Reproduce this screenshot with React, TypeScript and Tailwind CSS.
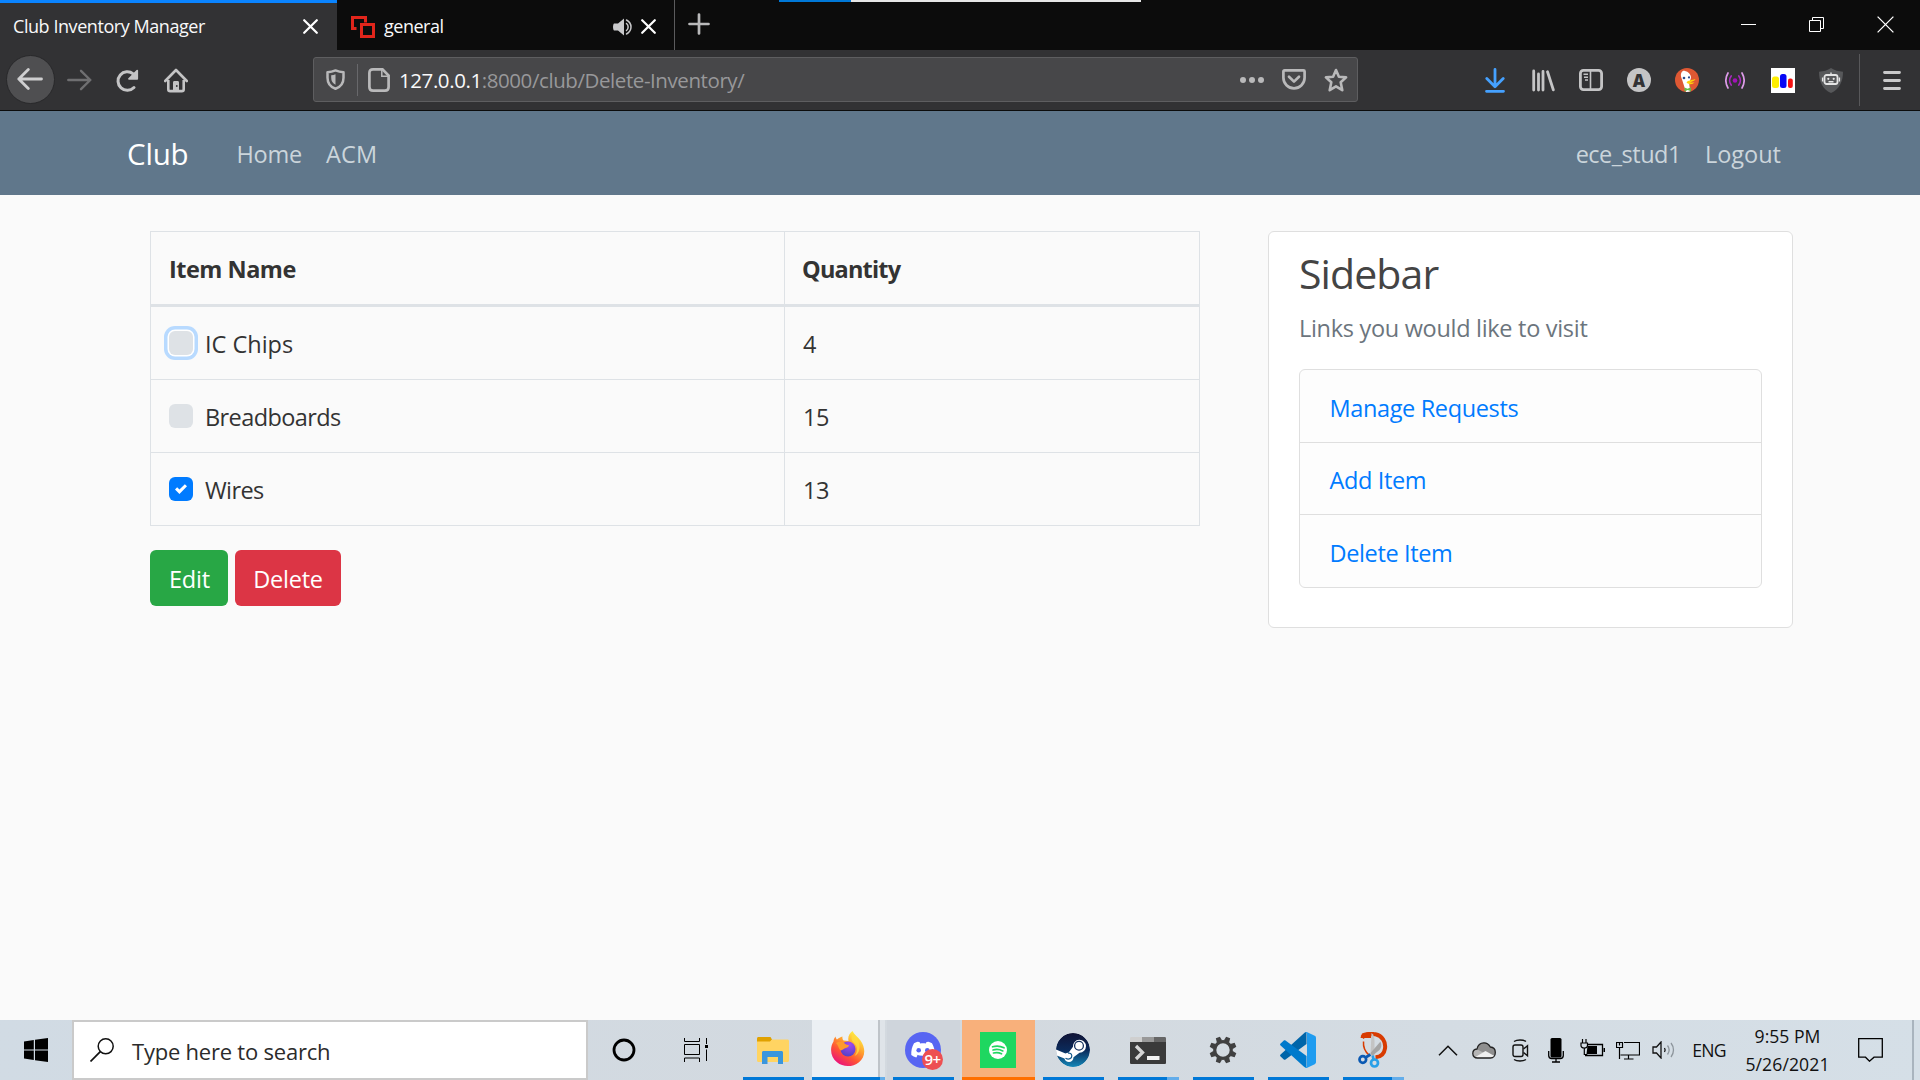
import type { ReactNode } from "react";

type IconProps = { className?: string };

function Svg({ w, h, box, className = "", children }: { w: number; h: number; box?: string; className?: string; children: ReactNode }) {
  return (
    <svg width={w} height={h} viewBox={box ?? `0 0 ${w} ${h}`} fill="none" className={`block shrink-0 ${className}`}>
      {children}
    </svg>
  );
}

/* ---------- Browser icons ---------- */

const CloseTab = ({ className }: IconProps) => (
  <Svg w={15} h={15} className={className}>
    <path d="M1.2 1.2l12.6 12.6M13.8 1.2L1.2 13.8" stroke="#fff" strokeWidth="2.2" strokeLinecap="round" />
  </Svg>
);

const SpeakerTab = () => (
  <Svg w={20} h={18}>
    <path d="M1 5.5h4L11 .5v17l-6-5H1c-.6 0-1-3-1-3.500s.4-3.500 1-3.500z" fill="#c9c9cb" />
    <path d="M13.500 5.500c2.200 1.800 2.200 5.200 0 7M13.500 2c6 3.300 6 10.700 0 14" stroke="#c9c9cb" strokeWidth="1.500" strokeLinecap="round" />
  </Svg>
);

const Favicon = () => (
  <Svg w={24} h={22}>
    <path d="M5.500 12.500H1.500v-11h13v5" stroke="#e1251b" strokeWidth="3" />
    <rect x="10.500" y="8.500" width="12" height="12" stroke="#e1251b" strokeWidth="3" />
  </Svg>
);

const Back = () => (
  <Svg w={26} h={22}>
    <path d="M24.500 11H1.800M11.300 1.500L1.800 11l9.500 9.500" stroke="#cfcfd0" strokeWidth="2.800" strokeLinecap="round" strokeLinejoin="round" />
  </Svg>
);

const Forward = () => (
  <Svg w={25} h={22}>
    <path d="M1.300 11h22M14 1.800l9.300 9.200-9.300 9.200" stroke="#6f6f71" strokeWidth="2.400" strokeLinecap="round" strokeLinejoin="round" />
  </Svg>
);

const Reload = () => (
  <Svg w={24} h={23}>
    <path d="M18 18.500A9.300 9.300 0 1 1 17.200 4.800l2.500 2.700" stroke="#c4c4c5" strokeWidth="3" strokeLinecap="round" />
    <path d="M21.200 1.600v8.200h-8.200z" fill="#c4c4c5" stroke="#c4c4c5" strokeWidth="1.800" strokeLinejoin="round" />
  </Svg>
);

const Home = () => (
  <Svg w={24} h={25}>
    <path d="M1.200 13L12 2l10.800 11" stroke="#c4c4c5" strokeWidth="2.600" strokeLinecap="round" strokeLinejoin="round" />
    <path d="M4.300 12v9.200c0 1.200.7 1.900 1.900 1.900h11.600c1.200 0 1.900-.7 1.900-1.900V12" stroke="#c4c4c5" strokeWidth="2.600" />
    <path d="M9 23v-8.500c0-1 .6-1.500 1.500-1.500h3c.9 0 1.500.5 1.500 1.500V23z" fill="#c4c4c5" />
    <circle cx="12.800" cy="18" r=".9" fill="#323234" />
  </Svg>
);

const ShieldUrl = () => (
  <Svg w={19} h={21}>
    <path d="M1.500 3.300C4.500 3 7.200 2.300 9.500 1.400c2.300.9 5 1.600 8 1.900v5.400c0 5.500-3 9.300-8 11-5-1.700-8-5.500-8-11z" stroke="#b9b9ba" strokeWidth="2.500" strokeLinejoin="round" />
    <path d="M9.500 5.200v10.600c-2.700-1.300-4.300-3.500-4.300-7V6.300c1.700-.2 3-.6 4.300-1.100z" fill="#b9b9ba" />
  </Svg>
);

const PageIcon = () => (
  <Svg w={22} h={24}>
    <path d="M5 1.400h9.500l6.100 6.100V19c0 2.400-1.300 3.600-3.600 3.600H5c-2.400 0-3.600-1.200-3.600-3.600V5C1.400 2.600 2.600 1.400 5 1.400z" stroke="#b9b9ba" strokeWidth="2.700" />
    <path d="M13.800 1.500v6.800h6.800" stroke="#b9b9ba" strokeWidth="1.500" />
  </Svg>
);

const Dots = () => (
  <Svg w={24} h={6}>
    <circle cx="3" cy="3" r="3" fill="#b9b9ba" />
    <circle cx="12" cy="3" r="3" fill="#b9b9ba" />
    <circle cx="21" cy="3" r="3" fill="#b9b9ba" />
  </Svg>
);

const Pocket = () => (
  <Svg w={24} h={21}>
    <path d="M2.500 1.400h19c.7 0 1.100.4 1.100 1.100v6.300a10.600 10.600 0 0 1-21.200 0V2.500c0-.7.400-1.100 1.100-1.100z" stroke="#b9b9ba" strokeWidth="2.700" />
    <path d="M7 7.700l5 4.900 5-4.900" stroke="#b9b9ba" strokeWidth="2.700" strokeLinecap="round" strokeLinejoin="round" />
  </Svg>
);

const Star = () => (
  <Svg w={24} h={24}>
    <path d="M12 2l2.900 6.700 7.200.7-5.400 4.900 1.600 7.900L12 18.300l-6.300 3.900 1.600-7.900-5.400-4.900 7.200-.7z" stroke="#b9b9ba" strokeWidth="2.600" strokeLinejoin="round" />
  </Svg>
);

const Download = () => (
  <Svg w={20} h={25}>
    <path d="M10 1.500v16M1.800 10.500l8.200 8.200 8.200-8.200M1.500 23.300h17" stroke="#45a1ff" strokeWidth="2.800" strokeLinecap="round" strokeLinejoin="round" />
  </Svg>
);

const Library = () => (
  <Svg w={24} h={23}>
    <path d="M2.700 2v19M7.500 5v16M12 2.500V21M16.500 2.800l5.800 18" stroke="#c4c4c5" strokeWidth="2.800" strokeLinecap="round" />
  </Svg>
);

const SidebarIcon = () => (
  <Svg w={24} h={22}>
    <rect x="1.400" y="1.400" width="21.200" height="19.200" rx="3" stroke="#c4c4c5" strokeWidth="2.800" />
    <path d="M11.500 2v18" stroke="#c4c4c5" strokeWidth="1.600" />
    <path d="M4.500 5.300h4.500M5 8.200h4M6 11h3" stroke="#c4c4c5" strokeWidth="1.500" />
  </Svg>
);

const Duck = () => (
  <Svg w={24} h={24}>
    <circle cx="12" cy="12" r="12" fill="#de5833" />
    <path d="M6.500 4.500C7.300 3 8.500 2.600 10 3c3.300.7 5.700 3 6 6 .1 2-1.300 3.500-1.700 5.500-.3 2 .5 5.500 1.200 8.800A12 12 0 0 1 11 24L7.500 13C6.500 10 5 7.500 6.500 4.500z" fill="#fff" />
    <circle cx="9" cy="10" r="1.300" fill="#2d4f8e" />
    <circle cx="14" cy="9.400" r="1.100" fill="#2d4f8e" />
    <path d="M11.500 14.500c1.500-2.500 5-2 9-3.500-.5 2-3.500 2.600-5.500 3.200 1.500.5 3 .4 4.500 0-1.500 2.300-5.500 2.800-8 .3z" fill="#fdd20a" />
    <path d="M9.500 19.500l3 1.200 3.500-1.500v4l-3.300-1.200-3.200 1.500z" fill="#65bc46" />
  </Svg>
);

const Podcast = () => (
  <Svg w={20} h={17}>
    <circle cx="10" cy="8.500" r="2.300" fill="#a312b8" />
    <path d="M6.200 4c-2 2.600-2 6.400 0 9M13.800 4c2 2.600 2 6.400 0 9" stroke="#a92abf" strokeWidth="1.700" strokeLinecap="round" />
    <path d="M3 1c-2.600 4.500-2.600 10.500 0 15M17 1c2.600 4.500 2.600 10.500 0 15" stroke="#dd9be8" strokeWidth="1.700" strokeLinecap="round" />
  </Svg>
);

const Bars = () => (
  <Svg w={24} h={25}>
    <path d="M0 0h24v25H0z" fill="#fff" />
    <rect x="1" y="8.500" width="7" height="11.500" rx="2.500" fill="#ffee00" />
    <rect x="9" y="6" width="6.500" height="14" rx="2.500" fill="#0707f5" />
    <rect x="17" y="10.500" width="4.800" height="9.500" rx="2" fill="#f51212" />
  </Svg>
);

const BotShield = () => (
  <Svg w={24} h={25}>
    <path d="M12 0c3.500 2.300 7.500 3.500 12 3.700C24 13.500 20.500 21 12 25 3.500 21 0 13.500 0 3.700 4.500 3.500 8.500 2.300 12 0z" fill="#57585a" />
    <rect x="5.500" y="7" width="13" height="9" rx="2" stroke="#e4e4e4" strokeWidth="1.800" />
    <path d="M12 4.500V7M3.600 9.500v4M20.400 9.500v4M9.500 13.700h5" stroke="#e4e4e4" strokeWidth="1.400" />
    <circle cx="9.300" cy="10.800" r="1.100" fill="#e4e4e4" />
    <circle cx="14.700" cy="10.800" r="1.100" fill="#e4e4e4" />
  </Svg>
);

const Menu = () => (
  <Svg w={18} h={19}>
    <path d="M1.500 1.500h15M1.500 9.500h15M1.500 17.500h15" stroke="#c9c9ca" strokeWidth="2.800" strokeLinecap="round" />
  </Svg>
);

/* ---------- Taskbar icons ---------- */

const Windows = () => (
  <Svg w={24} h={24}>
    <path d="M0 3.500L9.800 2v9.500H0zM11 1.800L24 0v11.500H11zM0 12.500h9.800V22L0 20.500zM11 12.500h13V24l-13-1.800z" fill="#000" />
  </Svg>
);

const Search = () => (
  <Svg w={24} h={24}>
    <circle cx="15.700" cy="8.300" r="7.500" stroke="#111" strokeWidth="1.500" />
    <path d="M10.300 13.700L.5 23.500" stroke="#111" strokeWidth="1.700" />
  </Svg>
);

const Cortana = () => (
  <Svg w={24} h={24}>
    <circle cx="12" cy="12" r="10" stroke="#000" strokeWidth="2.800" />
  </Svg>
);

const TaskView = () => (
  <Svg w={24} h={24}>
    <path d="M.5 0v3.500h15V0M.5 24v-4h15v4M.5 6.500h15v10H.5zM22.500 0v6M22.500 11.500V23" stroke="#000" />
    <path d="M21 7h3v3h-3z" fill="#000" />
  </Svg>
);

const Folder = () => (
  <Svg w={32} h={27}>
    <path d="M0 1.500C0 .6.600 0 1.500 0h12L15 2.500 13.500 5H0z" fill="#e0a100" />
    <path d="M0 4.500h13l2-2h15.500c.9 0 1.500.6 1.500 1.500v19.500c0 .9-.6 1.500-1.500 1.500h-29C.6 25 0 24.400 0 23.500z" fill="#ffd462" />
    <path d="M5 27V15.500c0-.9.600-1.500 1.500-1.500h18c.9 0 1.500.6 1.500 1.500V27h-5v-7H10.500v7z" fill="#3a96dd" />
  </Svg>
);

const Firefox = () => (
  <Svg w={34} h={36}>
    <defs>
      <linearGradient id="ffBody" x1="28" y1="4" x2="8" y2="34" gradientUnits="userSpaceOnUse">
        <stop offset="0" stopColor="#fff044" />
        <stop offset=".35" stopColor="#ffa22e" />
        <stop offset=".65" stopColor="#ff5434" />
        <stop offset="1" stopColor="#e9107e" />
      </linearGradient>
      <radialGradient id="ffGlobe" cx=".6" cy=".2" r=".9">
        <stop offset="0" stopColor="#a34bf0" />
        <stop offset="1" stopColor="#4a40c0" />
      </radialGradient>
    </defs>
    <path d="M21.500 0c1.500 3.500 5.500 6 8 9.500 6 8.500 4.300 17-1.500 21.700-6.500 5.300-16 5.100-22 .1C-.5 26-1.600 17 2.500 10.500c.2-2 .8-3.500 2-5 .3 1.500.8 2.300 1.500 3C7.500 7 9.500 6 11.500 5.500c-.3 1.800 0 3 1 4l5 .5c-.8-4 .5-7.500 4-10z" fill="url(#ffBody)" />
    <circle cx="17" cy="18" r="7.500" fill="url(#ffGlobe)" />
    <path d="M5 12c4-2.500 7.500-1 10 1.500l3 .7c-.5 2.500-3 2.300-4.500 3.300-2 1.300-3.500 2.500-4.500 1.500-1.500-2.500-2-5-4-7z" fill="#ff9a2c" />
    <path d="M22 2c3 4 6 7 6.500 12.500.5 5-1.500 9-5 10.500 3.500-4.500 3.500-9.500-1-13.500-2.500-2.500-2.500-6-.5-9.500z" fill="#ffdc3e" opacity=".8" />
  </Svg>
);

const Discord = () => (
  <Svg w={36} h={36}>
    <circle cx="18" cy="18" r="18" fill="#5865f2" />
    <path d="M12.500 9.800l2 .2.700 1.500c1.900-.3 3.700-.3 5.600 0l.7-1.500 2-.2c1.200.3 2.600.9 3.500 1.500 2 3.500 3 7.500 2.700 11.800a13 13 0 0 1-5 2.500l-1.200-2 .9-.9c-4 1.500-8.800 1.500-12.800 0l.9.900-1.200 2a13 13 0 0 1-5-2.500c-.3-4.300.7-8.300 2.700-11.800.9-.6 2.300-1.200 3.500-1.500z" fill="#fff" />
    <circle cx="13.700" cy="18.300" r="2.300" fill="#5865f2" />
    <circle cx="22.300" cy="18.300" r="2.300" fill="#5865f2" />
  </Svg>
);

const Spotify = () => (
  <Svg w={36} h={36}>
    <path d="M0 0h36v36H0z" fill="#1ed760" />
    <circle cx="18" cy="18" r="9" fill="#fff" />
    <path d="M12.500 14.800c4-1.200 8-.8 11.500 1M13 18c3.500-1 6.800-.6 9.800.9M13.500 21c3-.8 5.600-.5 8 .8" stroke="#1ed760" strokeWidth="1.700" strokeLinecap="round" />
  </Svg>
);

const Steam = () => (
  <Svg w={34} h={34}>
    <defs>
      <linearGradient id="steamBg" x1="17" y1="0" x2="17" y2="34" gradientUnits="userSpaceOnUse">
        <stop offset="0" stopColor="#111335" />
        <stop offset=".5" stopColor="#0b2a5a" />
        <stop offset="1" stopColor="#1387b8" />
      </linearGradient>
      <clipPath id="steamClip">
        <circle cx="17" cy="17" r="17" />
      </clipPath>
    </defs>
    <g clipPath="url(#steamClip)">
      <circle cx="17" cy="17" r="17" fill="url(#steamBg)" />
      <path d="M0 16.500l9.500 4c1-.6 2-.8 3-.7l4.500-6a6.500 6.500 0 1 1 6.500 6l-6 4.500c0 3-2 4.700-4.500 4.700s-4-1.500-4.500-3.500L-1 22z" fill="#fff" />
      <circle cx="23" cy="12.700" r="4.400" stroke="#14305e" strokeWidth="1.300" />
      <path d="M9.500 25.200c3.500 2 6.500 0 6.300-2.500-.2-2.200-2-3-3.800-2.500" stroke="#155a8c" strokeWidth="1.200" />
    </g>
  </Svg>
);

const Terminal = () => (
  <Svg w={36} h={27}>
    <path d="M0 5h36v20.500c0 1-.5 1.500-1.500 1.500h-33C.5 27 0 26.500 0 25.500z" fill="#3a3a3a" />
    <path d="M0 5V1.500C0 .5.500 0 1.500 0H12v5z" fill="#cfcfcf" />
    <path d="M12 0h12v5H12z" fill="#999" />
    <path d="M24 0h10.500c1 0 1.500.5 1.500 1.500V5H24z" fill="#666" />
    <path d="M6 9l6.500 6.500L6 22" stroke="#d6d6d6" strokeWidth="3.300" />
    <path d="M17 19h12.500v4H17z" fill="#f2f2f2" />
  </Svg>
);

const gearTeeth = [22.5, 67.5, 112.5, 157.5, 202.5, 247.5, 292.5, 337.5];

const Gear = () => (
  <Svg w={28} h={28}>
    <circle cx="14" cy="14" r="8.300" stroke="#404040" strokeWidth="3.200" />
    {gearTeeth.map((angle) => (
      <path key={angle} d="M11.800.5h4.400l.6 4.500h-5.600z" fill="#404040" transform={`rotate(${angle} 14 14)`} />
    ))}
  </Svg>
);

const VsCode = () => (
  <Svg w={36} h={36}>
    <path d="M26.500 0v12L5.500 27.500c-.6.4-1.200.4-1.700-.1L.6 24.600c-.7-.6-.7-1.500 0-2.100L24 1.200C24.800.5 25.600.1 26.500 0z" fill="#0065a9" />
    <path d="M26.500 36V24L5.500 8.500c-.6-.4-1.200-.4-1.700.1L.6 11.400c-.7.6-.7 1.500 0 2.100L24 34.800c.8.7 1.600 1.100 2.500 1.200z" fill="#007acc" />
    <path d="M25.500.3c.5-.3 1.200-.3 1.800 0l7.400 3.500c.8.400 1.300 1.200 1.300 2.100v24.200c0 .9-.5 1.700-1.300 2.100l-7.400 3.500c-1.200.5-2.300.1-3.200-.8 1.300 1.200 2.900.4 2.900-1.100V2.200c0-1.500-1.600-2.300-2.900-1.100z" fill="#1f9cf0" />
  </Svg>
);

const Snip = () => (
  <Svg w={30} h={36}>
    <path d="M4 5.500C7 2.500 12 1.300 17.500 2.300 24 3.600 28 9.500 27 16.500c-.8 5.500-4.500 8.500-9.500 8.800" stroke="#d83b01" strokeWidth="4" />
    <path d="M2.500 6L4 1.500C7 .3 10 0 14 0l-1 6z" fill="#d83b01" />
    <path d="M5.500 9.500c-.5 6 1.500 10 5.500 13.500" stroke="#d83b01" strokeWidth="1.500" />
    <path d="M13.500 1c2 1.500 3 4 3 8v15l-4-2z" fill="#c4c4c4" />
    <path d="M22.500 9.500c1.500 3.500 1 6-1 8.500l-7.500 6-1.500-3z" fill="#a5a5a5" />
    <circle cx="4.800" cy="27.500" r="3.300" stroke="#0a59b3" strokeWidth="2.700" />
    <path d="M7.500 25.500l5-3" stroke="#0a59b3" strokeWidth="2.700" />
    <circle cx="16.500" cy="31" r="3.500" stroke="#28a0e8" strokeWidth="2.700" />
    <path d="M15.500 27.500l-.8-4" stroke="#28a0e8" strokeWidth="2.700" />
  </Svg>
);

const Chevron = () => (
  <Svg w={20} h={11}>
    <path d="M1 10.200L10 1.200l9 9" stroke="#111" strokeWidth="1.500" />
  </Svg>
);

const Cloud = () => (
  <Svg w={24} h={17}>
    <path d="M5.500 16C2.500 16 .8 14 .8 11.500S2.500 7.200 5 7c.7-3.700 3.500-6.200 7-6.200 3 0 5 1.500 6.300 4.200 3 .2 5 2.500 5 5.500S21.500 16 18.500 16z" fill="#8f8f8f" />
    <path d="M5.500 16C2.500 16 .8 14 .8 11.500S3 7 5.500 7.500L12 11l10.500 3c-1 1.400-2.300 2-4 2z" fill="#b5b5b5" />
    <path d="M3 15.200L13.500 9l9 5c-1 1.400-2.300 2-4 2h-13c-1 0-1.800-.3-2.500-.8z" fill="#efefef" />
    <path d="M5.500 16C2.500 16 .8 14 .8 11.500S2.500 7.200 5 7c.7-3.700 3.500-6.200 7-6.200 3 0 5 1.500 6.300 4.200 3 .2 5 2.500 5 5.500S21.500 16 18.500 16z" stroke="#222" strokeWidth="1.300" />
  </Svg>
);

const Meet = () => (
  <Svg w={17} h={23}>
    <path d="M2 2.500C5 .5 11 .5 14 2.500M2 20.500c3 2 9 2 12 0" stroke="#111" strokeWidth="1.300" />
    <rect x="1" y="6" width="10" height="11.500" rx="2" stroke="#111" strokeWidth="1.400" />
    <path d="M11.500 10l4-3.300v10L11.500 13.500" stroke="#111" strokeWidth="1.400" />
  </Svg>
);

const Mic = () => (
  <Svg w={16} h={25}>
    <rect x="2.500" y="0" width="11" height="19.500" rx="1.500" fill="#000" />
    <path d="M.7 13v4.500c0 2 1 3 3 3h8.600c2 0 3-1 3-3V13M8 20.500V24M4 24h8" stroke="#000" strokeWidth="1.300" />
  </Svg>
);

const Battery = () => (
  <Svg w={25} h={18} className="-mt-1">
    <path d="M7 5.500h15.500v11H5" stroke="#000" strokeWidth="1.300" />
    <path d="M7.500 7h9.500v8H6.500zM23.500 9H25v4h-1.500z" fill="#000" />
    <path d="M2.500 0v4M6 0v4M1 4h6.500v2.500c0 1.500-1 2.500-3.200 2.500S1 8 1 6.500zM4.300 9v6.500h3" stroke="#000" strokeWidth="1.200" />
  </Svg>
);

const Network = () => (
  <Svg w={24} h={19}>
    <path d="M8 1.500h15.500V14H4.500M12.500 14v4M8 18h9.500M.5 1.500h6v5h-6zM3.500 6.500V18M3.500 1.500v3" stroke="#000" strokeWidth="1.200" />
  </Svg>
);

const Volume = () => (
  <Svg w={24} h={18}>
    <path d="M1 6h3.500L9 1v16L4.500 12H1z" stroke="#111" strokeWidth="1.300" />
    <path d="M12.500 7c.8 1.200.8 2.800 0 4" stroke="#111" strokeWidth="1.300" />
    <path d="M15.500 4.500c2 2.700 2 6.300 0 9M19 2c3.300 4.200 3.300 9.800 0 14" stroke="#8d959c" strokeWidth="1.300" />
  </Svg>
);

const Notification = () => (
  <Svg w={25} h={24}>
    <path d="M.7.700h23.600v18.500H16l-4.500 4-4-4H.7z" stroke="#000" strokeWidth="1.300" />
  </Svg>
);

/* ---------- Browser chrome ---------- */

function TabStrip() {
  return (
    <div className="relative flex h-[50px] bg-[#0c0c0c] text-[18px] text-[#f9f9fa]">
      <div className="flex w-[337px] items-center border-t-[3px] border-[#0a84ff] bg-[#323234] pl-[13px] pr-[19px]">
        <span className="grow pb-0.5 leading-6 tracking-[-0.44px]">Club Inventory Manager</span>
        <CloseTab className="-mt-px" />
      </div>
      <div className="flex w-[338px] items-center border-r border-[#5b5b5d] pl-[14px] pr-[18px] pt-[3px]">
        <Favicon />
        <span className="ml-[9px] grow pb-0.5 leading-6 tracking-[-0.5px]">general</span>
        <SpeakerTab />
        <CloseTab className="ml-[8px] -mt-px" />
      </div>
      <div className="flex w-12 items-center justify-center pb-0.5">
        <Svg w={22} h={22}>
          <path d="M11 1.500v19M1.500 11h19" stroke="#b9b9ba" strokeWidth="2.700" strokeLinecap="round" />
        </Svg>
      </div>
      <div className="ml-auto flex items-center pb-0.5">
        <div className="flex w-[69px] justify-center">
          <div className="ml-px h-px w-[15px] bg-white" />
        </div>
        <div className="flex w-[69px] justify-center">
          <Svg w={15} h={15}>
            <path d="M3.500 3.500v-3h11v11h-3M.5 3.500h11v11H.5z" stroke="#fff" />
          </Svg>
        </div>
        <div className="flex w-[69px] justify-center">
          <Svg w={17} h={17}>
            <path d="M.6.600l15.800 15.800M16.400.6L.6 16.400" stroke="#fff" strokeWidth="1.300" />
          </Svg>
        </div>
      </div>
      <div className="absolute left-[779px] top-0 flex h-[2px] w-[362px]">
        <div className="w-[72px] bg-[#0078d7]" />
        <div className="grow bg-[#e6e6e6]" />
      </div>
    </div>
  );
}

const extensions = [
  Download,
  Library,
  SidebarIcon,
  () => (
    <div className="flex size-6 items-center justify-center rounded-full bg-[#c4c4c5] text-[17px] font-extrabold leading-none text-[#323234]">A</div>
  ),
  Duck,
  Podcast,
  Bars,
  BotShield,
];

function Toolbar() {
  return (
    <div className="flex h-[61px] items-center border-b border-[#0c0c0c] bg-[#323234]">
      <div className="ml-1.5 mt-[-2px] flex size-[49px] items-center justify-center rounded-full border border-[#28282a] bg-[#4f4f51] pr-px">
        <Back />
      </div>
      <div className="ml-3"><Forward /></div>
      <div className="ml-6"><Reload /></div>
      <div className="ml-6"><Home /></div>
      <div className="ml-[125px] mt-[-1px] flex h-[45px] w-[1045px] items-center rounded-[3px] border border-[#5e5e60] bg-[#474749]">
        <div className="ml-3"><ShieldUrl /></div>
        <div className="ml-3 h-8 w-px bg-[#68686b]" />
        <div className="ml-2.5"><PageIcon /></div>
        <div className="ml-[9px] grow text-[20.5px] leading-7 tracking-[-0.42px] text-[#98989a]">
          <span className="text-[#f9f9fa]">127.0.0.1</span>:8000/club/Delete-Inventory/
        </div>
        <Dots />
        <div className="ml-[18px]"><Pocket /></div>
        <div className="ml-[18px] mr-[9px]"><Star /></div>
      </div>
      <div className="ml-auto flex items-center">
        {extensions.map((Icon, i) => (
          <div key={i} className="flex w-12 justify-center">
            <Icon />
          </div>
        ))}
        <div className="ml-1 h-[52px] w-px bg-[#58585a]" />
        <div className="ml-[23px] mr-[19px]"><Menu /></div>
      </div>
    </div>
  );
}

/* ---------- Page ---------- */

function Navbar() {
  return (
    <nav className="flex h-[84px] items-center bg-[#60778b] pl-[127px] pr-[139px] pt-0.5 text-[23.5px] leading-9 text-[#cbd5db]">
      <span className="text-[29.5px] tracking-[-0.2px] text-white">Club</span>
      <span className="ml-12 tracking-[-0.2px]">Home</span>
      <span className="ml-6 tracking-[0.2px]">ACM</span>
      <span className="ml-auto tracking-[-0.5px]">ece_stud1</span>
      <span className="ml-6">Logout</span>
    </nav>
  );
}

const items = [
  { name: "IC Chips", quantity: 4, state: "focus" },
  { name: "Breadboards", quantity: 15, state: "off" },
  { name: "Wires", quantity: 13, state: "on" },
];

function Checkbox({ state }: { state: string }) {
  if (state === "on") {
    return (
      <span className="flex size-6 items-center justify-center rounded-md bg-[#007bff]">
        <Svg w={12} h={12} box="0 0 8 8">
          <path fill="#fff" d="M6.564.75l-3.590 3.612-1.538-1.550L0 4.260 2.974 7.250 8 2.193z" />
        </Svg>
      </span>
    );
  }
  if (state === "focus") {
    return <span className="size-6 rounded-md bg-[#dee2e6] shadow-[0_0_0_1.5px_#fff,0_0_0_5px_#b8daff]" />;
  }
  return <span className="size-6 rounded-md bg-[#dee2e6]" />;
}

function Inventory() {
  return (
    <section className="w-[1050px]">
      <div className="border border-[#dee2e6]">
        <div className="flex h-[75px] border-b-[3px] border-[#dee2e6] font-bold leading-9">
          <div className="flex w-[634px] items-center border-r border-[#dee2e6] pl-[18px] pt-0.5 tracking-[-0.5px]">Item Name</div>
          <div className="flex items-center pl-[17px] pt-0.5 tracking-[-0.8px]">Quantity</div>
        </div>
        {items.map((item) => (
          <div key={item.name} className="flex h-[73px] border-b border-[#dee2e6] leading-9 last:h-[72px] last:border-b-0">
            <div className="flex w-[634px] items-center border-r border-[#dee2e6] pl-[18px]">
              <Checkbox state={item.state} />
              <span className={`ml-3 pt-px ${item.name === "IC Chips" ? "tracking-normal" : "tracking-[-0.6px]"}`}>{item.name}</span>
            </div>
            <div className="flex items-center pl-[18px] pt-px tracking-[-0.4px]">{item.quantity}</div>
          </div>
        ))}
      </div>
      <div className="mt-6 flex gap-[7px] leading-9 text-white">
        <button className="h-14 w-[78px] rounded-md bg-[#28a745] pl-px pt-0.5 tracking-[-0.2px]">Edit</button>
        <button className="h-14 w-[106px] rounded-md bg-[#dc3545] pt-0.5 tracking-[-0.25px]">Delete</button>
      </div>
    </section>
  );
}

const links = ["Manage Requests", "Add Item", "Delete Item"];

function Sidebar() {
  return (
    <aside className="h-[397px] w-[525px] rounded-md border border-[#dfdfdf] bg-white px-[30px] pt-4">
      <h3 className="text-[41px] leading-[50px] tracking-[-0.9px] text-[#444]">Sidebar</h3>
      <p className="mt-3 leading-9 tracking-[-0.3px] text-[#6c757d]">Links you would like to visit</p>
      <ul className="mt-[23px] divide-y divide-[#dfdfdf] rounded-md border border-[#dfdfdf] bg-[#fdfdfd] text-[#007bff]">
        {links.map((link) => (
          <li key={link} className="flex h-[72px] items-center pl-[29.5px] pt-[3px] leading-9 tracking-[-0.36px] first:h-[73px]">
            {link}
          </li>
        ))}
      </ul>
    </aside>
  );
}

/* ---------- Taskbar ---------- */

function TaskButton({ children, split = false, tone = "" }: { children: ReactNode; split?: boolean; tone?: string }) {
  return (
    <div className={`flex w-[73px] flex-col items-center ${tone}`}>
      <div className="flex h-[57px] items-center pr-px pt-[3px]">{children}</div>
      {split ? (
        <div className="flex h-[3px] w-[61px]">
          <div className="w-[49px] bg-[#0078d7]" />
          <div className="grow bg-[#63adea]" />
        </div>
      ) : (
        <div className="h-[3px] w-[61px] bg-[#0078d7]" />
      )}
    </div>
  );
}

const tray = [Chevron, Cloud, Meet, Mic, Battery, Network, Volume];

function Taskbar() {
  return (
    <footer className="flex h-[60px] bg-linear-to-r from-[#d1dbe4] via-[#d3d9df] to-[#d5dfe7] text-[17.6px] text-[#111]">
      <div className="flex w-[72px] items-center justify-center"><Windows /></div>
      <div className="flex w-[516px] items-center border-2 border-[#cacaca] bg-white pl-4">
        <Search />
        <span className="ml-[18px] pt-0.5 text-[22px] leading-8 tracking-[-0.22px] text-[#2b2b2b]">Type here to search</span>
      </div>
      <div className="flex w-[72px] items-center justify-center"><Cortana /></div>
      <div className="flex w-[72px] items-center justify-center"><TaskView /></div>
      <div className="ml-[5px] flex gap-0.5">
        <TaskButton><Folder /></TaskButton>
        <div className="flex w-[73px] flex-col">
          <div className="flex h-[57px]">
            <div className="flex w-[66px] items-center justify-center bg-[#ecf0f4] pl-[6px] pt-[1px]"><Firefox /></div>
            <div className="w-0.5 bg-[#bfc4c9]" />
            <div className="grow bg-[#dfe4e9]" />
          </div>
          <div className="flex h-[3px]">
            <div className="w-[68px] bg-[#0078d7]" />
            <div className="grow bg-[#63adea]" />
          </div>
        </div>
        <TaskButton tone="bg-[#cfd5dc]">
          <div className="relative">
            <Discord />
            <div className="absolute left-[17px] top-[17px] flex size-[21px] items-center justify-center rounded-full bg-[#ed4f52] text-[15px] font-semibold leading-none tracking-[-0.5px] text-white">9+</div>
          </div>
        </TaskButton>
        <div className="flex w-[73px] flex-col bg-[#f8b07b]">
          <div className="flex h-[57px] items-center justify-center pr-px pt-[3px]"><Spotify /></div>
          <div className="h-[3px] bg-[#ff6f00]" />
        </div>
        <TaskButton><Steam /></TaskButton>
        <TaskButton split><Terminal /></TaskButton>
        <TaskButton><Gear /></TaskButton>
        <TaskButton><VsCode /></TaskButton>
        <TaskButton split><Snip /></TaskButton>
      </div>
      <div className="ml-5 flex items-center">
        {tray.map((Icon, i) => (
          <div key={i} className="flex w-9 justify-center">
            <Icon />
          </div>
        ))}
      </div>
      <div className="flex w-[54px] items-center justify-center tracking-[-0.8px]">ENG</div>
      <div className="flex w-[103px] flex-col items-center pt-[2px] leading-7">
        <span>9:55 PM</span>
        <span className="tracking-[0.1px]">5/26/2021</span>
      </div>
      <div className="flex w-[62px] items-center justify-center"><Notification /></div>
      <div className="ml-auto w-2 border-l-2 border-[#a9b4be]" />
    </footer>
  );
}

export default function App() {
  return (
    <div className="flex h-[1080px] w-[1920px] flex-col overflow-hidden bg-[#fafafa] font-['Open_Sans','Noto_Sans',sans-serif]">
      <TabStrip />
      <Toolbar />
      <Navbar />
      <main className="flex grow items-start gap-[68px] pl-[150px] pt-9 text-[23.5px] text-[#333]">
        <Inventory />
        <Sidebar />
      </main>
      <Taskbar />
    </div>
  );
}
